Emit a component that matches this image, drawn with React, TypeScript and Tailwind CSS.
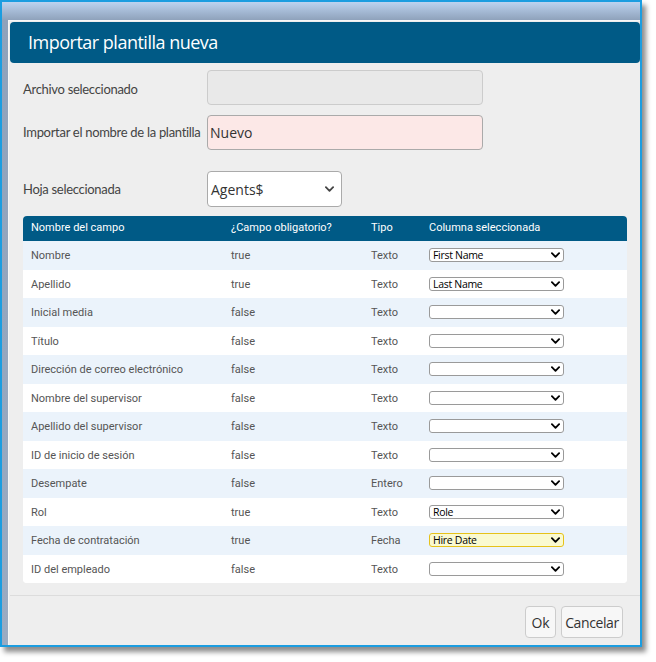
import React from "react"

type Row = {
  name: string
  required: string
  type: string
  column: string
  highlight?: boolean
}

const rows: Row[] = [
  { name: "Nombre", required: "true", type: "Texto", column: "First Name" },
  { name: "Apellido", required: "true", type: "Texto", column: "Last Name" },
  { name: "Inicial media", required: "false", type: "Texto", column: "" },
  { name: "Título", required: "false", type: "Texto", column: "" },
  { name: "Dirección de correo electrónico", required: "false", type: "Texto", column: "" },
  { name: "Nombre del supervisor", required: "false", type: "Texto", column: "" },
  { name: "Apellido del supervisor", required: "false", type: "Texto", column: "" },
  { name: "ID de inicio de sesión", required: "false", type: "Texto", column: "" },
  { name: "Desempate", required: "false", type: "Entero", column: "" },
  { name: "Rol", required: "true", type: "Texto", column: "Role" },
  { name: "Fecha de contratación", required: "true", type: "Fecha", column: "Hire Date", highlight: true },
  { name: "ID del empleado", required: "false", type: "Texto", column: "" },
]

function Chevron({ className }: { className?: string }) {
  return (
    <svg viewBox="0 0 10 6" className={className} fill="none">
      <path d="M1 1l4 4 4-4" stroke="currentColor" strokeWidth="2" strokeLinecap="round" strokeLinejoin="round" />
    </svg>
  )
}

function ColumnSelect({ value, highlight }: { value: string; highlight?: boolean }) {
  return (
    <div
      className={
        highlight
          ? "flex items-center justify-between w-[135px] h-[14px] rounded-[3px] border border-[#e6c21a] bg-[#fafad0] pl-[3px] pr-[3px]"
          : "flex items-center justify-between w-[135px] h-[14px] rounded-[3px] border border-[#9a9a9a] bg-white pl-[3px] pr-[3px]"
      }
    >
      <span className="text-[10.5px] leading-none text-black font-['Open_Sans',sans-serif] tracking-[-0.3px]">{value}</span>
      <Chevron className="w-[9px] h-[6px] text-black" />
    </div>
  )
}

export default function App() {
  return (
    <div className="w-[656px] h-[662px] bg-white font-['Lato',sans-serif]">
      <div className="w-[642px] h-[647px] border-2 border-[#1b9de0] flex flex-col shadow-[4px_5px_5px_rgba(0,0,0,0.45)]">
        <div className="h-[18px] bg-gradient-to-b from-[#bcd3f0] to-[#8fa2bb]" />
        <div className="flex flex-1">
          <div className="w-[6px] bg-gradient-to-b from-[#8fa2bb] to-[#9aabc2]" />
          <div className="flex-1 flex flex-col bg-[#eeeeee] border-t border-l border-[#f7f7f7] pt-[1px] pl-[1px]">
            <div className="h-[41px] bg-[#005a86] rounded-[4px] flex items-center pl-[18px]">
              <h1 className="text-white text-[18px] font-['Open_Sans',sans-serif] tracking-[-0.5px]">Importar plantilla nueva</h1>
            </div>

            <div className="pl-[13px] text-[13px] text-[#444] tracking-[-0.3px]">
              <div className="flex items-center mt-[7px]">
                <span className="w-[184px] whitespace-nowrap pt-[4px]">Archivo seleccionado</span>
                <div className="w-[276px] h-[35px] rounded-[4px] border border-[#cccccc] bg-[#e9e9e9]" />
              </div>
              <div className="flex items-center mt-[10px]">
                <span className="w-[184px] whitespace-nowrap pt-[1px]">Importar el nombre de la plantilla</span>
                <div className="w-[276px] h-[35px] rounded-[4px] border border-[#aaaaaa] bg-[#fce8e7] flex items-center pl-[2px] text-[14px] text-[#333] font-['Open_Sans',sans-serif] tracking-normal">
                  Nuevo
                </div>
              </div>
              <div className="flex items-center mt-[21px]">
                <span className="w-[184px] whitespace-nowrap pt-[2px]">Hoja seleccionada</span>
                <div className="w-[135px] h-[36px] rounded-[4px] border border-[#aaaaaa] bg-white flex items-center justify-between pl-[3px] pr-[7px] text-[14px] text-[#333] font-['Open_Sans',sans-serif] tracking-normal">
                  <span>Agents$</span>
                  <Chevron className="w-[9px] h-[6px] text-[#444]" />
                </div>
              </div>
            </div>

            <div className="mt-[9px] ml-[13px] w-[604px] rounded-[4px] bg-white overflow-hidden font-['Roboto',sans-serif] text-[11px]">
              <div className="grid grid-cols-[200px_140px_58px_1fr] items-center h-[25px] bg-[#005a86] pl-[8px] text-white">
                <span>Nombre del campo</span>
                <span>¿Campo obligatorio?</span>
                <span>Tipo</span>
                <span>Columna seleccionada</span>
              </div>
              {rows.map((r, i) => (
                <div
                  key={r.name}
                  className={
                    i % 2 === 0
                      ? "grid grid-cols-[200px_140px_58px_1fr] items-center h-[28.5px] bg-[#ebf3fb] pl-[8px] text-[#555]"
                      : "grid grid-cols-[200px_140px_58px_1fr] items-center h-[28.5px] bg-white pl-[8px] text-[#555]"
                  }
                >
                  <span className="pt-[2px]">{r.name}</span>
                  <span className="pt-[2px]">{r.required}</span>
                  <span className="pt-[2px]">{r.type}</span>
                  <ColumnSelect value={r.column} highlight={r.highlight} />
                </div>
              ))}
            </div>

            <div className="mt-[12px] h-px bg-[#dcdcdc]" />

            <div className="flex justify-end gap-[5px] pr-[17px] mt-[10px]">
              <button className="h-[32px] w-[31px] rounded-[4px] border border-[#cccccc] bg-[#f7f7f7] text-[14px] text-[#333] font-['Open_Sans',sans-serif]">
                Ok
              </button>
              <button className="h-[32px] w-[62px] rounded-[4px] border border-[#cccccc] bg-[#f7f7f7] text-[14px] text-[#333] font-['Open_Sans',sans-serif] tracking-[-0.4px]">
                Cancelar
              </button>
            </div>
          </div>
        </div>
      </div>
    </div>
  )
}
